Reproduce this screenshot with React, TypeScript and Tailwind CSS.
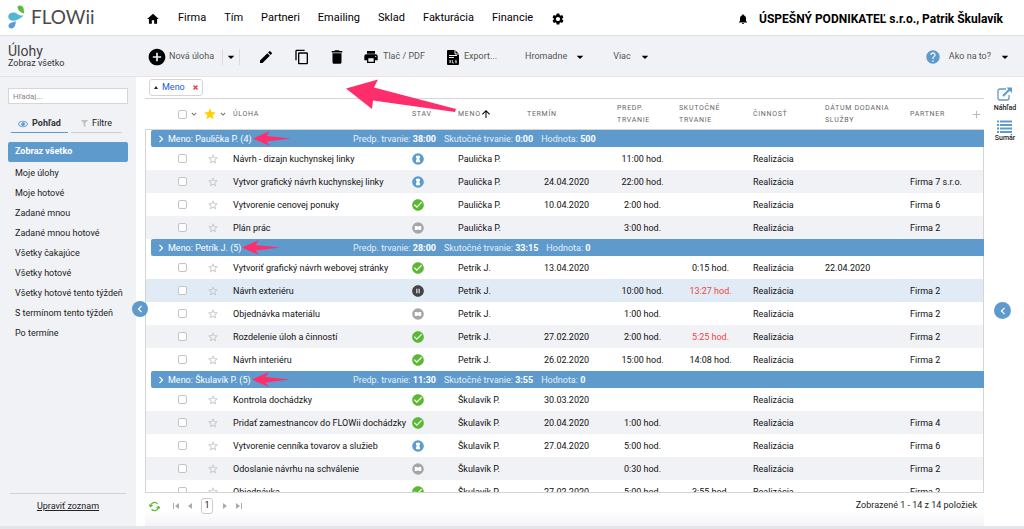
import { useState } from 'react';
import type { ReactNode } from 'react';
import {
  MdAdd,
  MdAddCircle,
  MdArrowDropDown,
  MdArrowUpward,
  MdCheckCircle,
  MdChevronLeft,
  MdChevronRight,
  MdContentCopy,
  MdDelete,
  MdEdit,
  MdHelp,
  MdHome,
  MdKeyboardArrowDown,
  MdNotifications,
  MdPauseCircleFilled,
  MdPrint,
  MdSettings,
  MdStar,
  MdStarBorder,
} from 'react-icons/md';
import { FaFilter, FaRegEye } from 'react-icons/fa';
import clsx from 'clsx';

type Status = 'waiting' | 'done' | 'postponed' | 'paused';

interface Task {
  name: string;
  status: Status;
  due?: string;
  planned?: string;
  actual?: string;
  late?: boolean;
  activity: string;
  delivered?: string;
  partner?: string;
  selected?: boolean;
}

interface Group {
  person: string;
  count: number;
  planned: string;
  actual: string;
  value: string;
  tasks: Task[];
}

const menu = ['Firma', 'Tím', 'Partneri', 'Emailing', 'Sklad', 'Fakturácia', 'Financie'];

const views = [
  'Zobraz všetko',
  'Moje úlohy',
  'Moje hotové',
  'Zadané mnou',
  'Zadané mnou hotové',
  'Všetky čakajúce',
  'Všetky hotové',
  'Všetky hotové tento týždeň',
  'S termínom tento týždeň',
  'Po termíne',
];

const groups: Group[] = [
  {
    person: 'Paulička P.',
    count: 4,
    planned: '38:00',
    actual: '0:00',
    value: '500',
    tasks: [
      { name: 'Návrh - dizajn kuchynskej linky', status: 'waiting', planned: '11:00 hod.', activity: 'Realizácia' },
      { name: 'Vytvor grafický návrh kuchynskej linky', status: 'waiting', due: '24.04.2020', planned: '22:00 hod.', activity: 'Realizácia', partner: 'Firma 7 s.r.o.' },
      { name: 'Vytvorenie cenovej ponuky', status: 'done', due: '10.04.2020', planned: '2:00 hod.', activity: 'Realizácia', partner: 'Firma 6' },
      { name: 'Plán prác', status: 'postponed', planned: '3:00 hod.', activity: 'Realizácia', partner: 'Firma 2' },
    ],
  },
  {
    person: 'Petrík J.',
    count: 5,
    planned: '28:00',
    actual: '33:15',
    value: '0',
    tasks: [
      { name: 'Vytvoriť grafický návrh webovej stránky', status: 'done', due: '13.04.2020', actual: '0:15 hod.', activity: 'Realizácia', delivered: '22.04.2020' },
      { name: 'Návrh exteriéru', status: 'paused', planned: '10:00 hod.', actual: '13:27 hod.', late: true, activity: 'Realizácia', partner: 'Firma 2', selected: true },
      { name: 'Objednávka materiálu', status: 'postponed', planned: '1:00 hod.', activity: 'Realizácia', partner: 'Firma 2' },
      { name: 'Rozdelenie úloh a činností', status: 'done', due: '27.02.2020', planned: '2:00 hod.', actual: '5:25 hod.', late: true, activity: 'Realizácia', partner: 'Firma 2' },
      { name: 'Návrh interiéru', status: 'done', due: '26.02.2020', planned: '15:00 hod.', actual: '14:08 hod.', activity: 'Realizácia', partner: 'Firma 2' },
    ],
  },
  {
    person: 'Škulavík P.',
    count: 5,
    planned: '11:30',
    actual: '3:55',
    value: '0',
    tasks: [
      { name: 'Kontrola dochádzky', status: 'done', due: '30.03.2020', activity: 'Realizácia' },
      { name: 'Pridať zamestnancov do FLOWii dochádzky', status: 'done', due: '20.04.2020', planned: '1:00 hod.', activity: 'Realizácia', partner: 'Firma 4' },
      { name: 'Vytvorenie cenníka tovarov a služieb', status: 'waiting', due: '27.04.2020', planned: '5:00 hod.', activity: 'Realizácia', partner: 'Firma 6' },
      { name: 'Odoslanie návrhu na schválenie', status: 'postponed', planned: '0:30 hod.', activity: 'Realizácia', partner: 'Firma 2' },
      { name: 'Objednávka', status: 'done', due: '27.02.2020', planned: '5:00 hod.', actual: '3:55 hod.', activity: 'Realizácia', partner: 'Firma 2' },
    ],
  },
];

function Logo() {
  return (
    <a href="#" aria-label="FLOWii" className="flex w-[140px] items-center gap-[6px] pb-[3px] pl-2">
      <svg width="17" height="24" viewBox="0 0 17 24">
        <path d="M9.500 1.500C11.500-.5 15 .8 15.600 3.400c.3 1.600.2 3.400.6 5.200C13.200 7.600 9.400 5.400 9.500 1.500z" fill="#5dba3a" />
        <path d="M.4 10.800C1.200 7.200 6.300 6.500 9.500 8.900c1.800 1.300 4 1.700 6 1.500-1.600 2.200-4 3.200-6.600 4.600C5 17 -.6 15 .4 10.800z" fill="#53b7cf" />
        <path d="M.5 20.600c.3-2.200 2.400-3 4.300-3.300 1.400-.3 2-.6 2.900-1.300.2 2.700-.3 5-2 6.600C3.900 24.200.2 23.500.5 20.600z" fill="#5b9bd5" />
      </svg>
      <span className="font-['Lato',sans-serif] text-[19px] leading-6 text-[#4a4a4a]">FLOWii</span>
    </a>
  );
}

function Caret() {
  return <MdArrowDropDown className="size-4 text-black" />;
}

function StatusIcon({ status }: { status: Status }) {
  if (status === 'done') return <MdCheckCircle className="size-[14px] text-[#5cb832]" aria-label="Hotové" />;
  if (status === 'paused') return <MdPauseCircleFilled className="size-[14px] text-[#444]" aria-label="Pozastavené" />;
  if (status === 'waiting') {
    return (
      <svg width="14" height="14" viewBox="0 0 24 24" aria-label="Čaká">
        <circle cx="12" cy="12" r="10" fill="#5b9bd0" />
        <path d="M8.500 6.500h7v3L14 12l1.500 2.500v3h-7v-3L10 12 8.500 9.500z" fill="#fff" />
      </svg>
    );
  }
  return (
    <svg width="14" height="14" viewBox="0 0 24 24" aria-label="Odložené">
      <circle cx="12" cy="12" r="10" fill="#a6a6a6" />
      <path d="M6.500 8.500H10l2 1.500 2-1.500h3.500v7H14L12 14l-2 1.500H6.500z" fill="#fff" />
    </svg>
  );
}

function CheckBox({ label }: { label: string }) {
  return (
    <input
      type="checkbox"
      aria-label={label}
      className="block size-[9px] appearance-none rounded-[2px] border border-[#c4c4c4] bg-white checked:bg-[#5f9acd]"
    />
  );
}

function ToolButton({ icon, label, className }: { icon?: ReactNode; label: string; className?: string }) {
  return (
    <button type="button" className={clsx('flex items-center whitespace-nowrap', className)}>
      {icon}
      {label}
    </button>
  );
}

function Toolbar() {
  return (
    <div className="flex h-[41px] shrink-0 items-center border-b border-[#ebe3e5] bg-[#f1f2f6] pt-[2px] text-[9px] text-[#555]">
      <div className="w-[147px] shrink-0 pb-[2px] pl-2">
        <h1 className="text-[14px] leading-[14px] text-[#444]">Úlohy</h1>
        <p className="leading-[11px] text-[#333]">Zobraz všetko</p>
      </div>
      <ToolButton icon={<MdAddCircle className="size-5 text-black" />} label="Nová úloha" className="gap-[2px]" />
      <button type="button" aria-label="Ďalšie možnosti" className="ml-2 mr-[18px] flex h-4 items-center border-x border-[#dcdcdf]">
        <Caret />
      </button>
      <button type="button" aria-label="Upraviť" className="mr-5">
        <MdEdit className="size-4 text-black" />
      </button>
      <button type="button" aria-label="Kopírovať" className="mr-[18px]">
        <MdContentCopy className="size-4 text-black" />
      </button>
      <button type="button" aria-label="Odstrániť" className="mr-[17px]">
        <MdDelete className="size-[18px] text-black" />
      </button>
      <ToolButton icon={<MdPrint className="size-4 text-black" />} label="Tlač / PDF" className="gap-1" />
      <ToolButton
        className="ml-[22px] gap-[5px]"
        label="Export..."
        icon={
          <svg width="12" height="15" viewBox="0 0 12 15">
            <path d="M1 0h7l4 4v10a1 1 0 0 1-1 1H1a1 1 0 0 1-1-1V1a1 1 0 0 1 1-1z" fill="#000" />
            <path d="M8 0v4h4M2 5.500h8M2 7.500h5" stroke="#f1f2f6" strokeWidth="1" fill="none" />
            <path d="M2.500 10l1.500 3M4 10l-1.500 3M5.500 10v3h1.500M9.700 10.300H8.500v1.200h1v1.200H8" stroke="#f1f2f6" strokeWidth=".7" fill="none" />
          </svg>
        }
      />
      <button type="button" className="ml-[28px] flex items-center gap-[5px]">
        Hromadne <Caret />
      </button>
      <button type="button" className="ml-[25px] flex items-center gap-[6px]">
        Viac <Caret />
      </button>
      <button type="button" className="ml-auto mr-[11px] flex items-center gap-[6px]">
        <MdHelp className="mr-[2px] size-4 text-[#5f9acd]" />
        Ako na to? <Caret />
      </button>
    </div>
  );
}

function Sidebar() {
  const [active, setActive] = useState(views[0]);

  return (
    <aside className="relative flex w-[136px] shrink-0 flex-col bg-[#f1f2f6] pt-[11px] text-[9px] text-[#222]">
      <input
        type="text"
        aria-label="Hľadaj"
        placeholder="Hľadaj..."
        className="mx-2 h-4 w-[120px] border border-[#d6d6d9] bg-white px-1 text-[8px] placeholder:text-[#888]"
      />
      <div className="mt-[11px] flex gap-[3px] px-[11px]">
        <button type="button" className="flex h-[18px] w-[57px] items-center justify-center gap-1 border-b border-[#5f9acd] font-bold text-[#333]">
          <FaRegEye className="size-[10px] text-[#5f9acd]" /> Pohľad
        </button>
        <button type="button" className="flex h-[18px] w-[51px] items-center justify-center gap-1 border-b border-[#cfcfcf]">
          <FaFilter className="size-[7px] text-[#c2c2c2]" /> Filtre
        </button>
      </div>
      <ul className="mt-[9px] px-2">
        {views.map((view) => (
          <li key={view}>
            <button
              type="button"
              onClick={() => setActive(view)}
              className={clsx(
                'block h-5 w-[120px] whitespace-nowrap rounded-[2px] pl-[7px] text-left',
                active === view && 'mb-[2px] bg-[#5f9acd] font-bold text-white'
              )}
            >
              {view}
            </button>
          </li>
        ))}
      </ul>
      <div className="mx-[10px] mb-[13px] mt-auto border-t border-[#d0d1d5] pt-[6px] text-center">
        <a href="#" className="underline">Upraviť zoznam</a>
      </div>
      <button
        type="button"
        aria-label="Skryť panel"
        className="absolute -right-3 top-[224px] z-10 flex size-4 items-center justify-center rounded-full bg-[#5f9acd] text-white"
      >
        <MdChevronLeft className="size-[14px]" />
      </button>
    </aside>
  );
}

function GroupArrow() {
  return (
    <svg width="38" height="15" viewBox="0 0 38 15" className="shrink-0">
      <path d="M0 7.500L17 0l-3.500 5L38 7.500l-24.500 3L17 15z" fill="#ff2d6b" />
    </svg>
  );
}

function GroupRow({ group }: { group: Group }) {
  return (
    <tr className="h-[17px]">
      <td className="border-l border-[#d5d5d5]" />
      <th colSpan={12} scope="rowgroup" className="rounded-l-[2px] bg-[#5f9acd] text-left font-normal text-white">
        <div className="flex items-center">
          <button type="button" className="flex h-[17px] w-[202px] items-center gap-[1px] pl-[3px]">
            <span className="flex items-center">
              <MdChevronRight className="size-[14px]" stroke="currentColor" />
              Meno: {group.person} ({group.count})
            </span>
            <GroupArrow />
          </button>
          <span className="flex gap-2 text-[#e4eef7]">
            <span>Predp. trvanie: <b className="text-white">{group.planned}</b></span>
            <span>Skutočné trvanie: <b className="text-white">{group.actual}</b></span>
            <span>Hodnota: <b className="text-white">{group.value}</b></span>
          </span>
        </div>
      </th>
    </tr>
  );
}

function TaskRow({ task, person }: { task: Task; person: string }) {
  return (
    <tr className={clsx('h-[23px]', task.selected ? 'bg-[#e1ebf5]' : 'even:bg-white odd:bg-[#f1f2f6]')}>
      <td className="border-l border-[#d5d5d5]" />
      <td className="pl-[27px]"><CheckBox label={task.name} /></td>
      <td>
        <button type="button" aria-label="Obľúbené" className="block">
          <MdStarBorder className="size-3 text-[#c4c4c4]" />
        </button>
      </td>
      <td>{task.name}</td>
      <td><span className="-ml-px block"><StatusIcon status={task.status} /></span></td>
      <td>{person}</td>
      <td className="text-center">{task.due}</td>
      <td className="text-center">{task.planned}</td>
      <td className={clsx('text-center', task.late && 'text-[#ee4444]')}>{task.actual}</td>
      <td className="pl-[11px]">{task.activity}</td>
      <td>{task.delivered}</td>
      <td>{task.partner}</td>
      <td className="border-r border-[#d5d5d5]" />
    </tr>
  );
}

function TaskTable() {
  return (
    <div className="min-h-0 flex-1 overflow-hidden border-b border-t border-[#d5d5d5]">
      <table className="w-full table-fixed border-separate border-spacing-0 whitespace-nowrap text-[9px] leading-[12px] text-[#111]">
        <colgroup>
          <col className="w-[6px]" />
          <col className="w-[56px]" />
          <col className="w-[26px]" />
          <col />
          <col className="w-[46px]" />
          <col className="w-[69px]" />
          <col className="w-[79px]" />
          <col className="w-[73px]" />
          <col className="w-[63px]" />
          <col className="w-[83px]" />
          <col className="w-[85px]" />
          <col className="w-[60px]" />
          <col className="w-[14px]" />
        </colgroup>
        <thead>
          <tr className="h-[31px] text-left text-[7px] tracking-widest text-[#666] [&>th]:border-b [&>th]:border-[#d5d5d5] [&>th]:font-normal">
            <td className="border-b border-[#d5d5d5]" />
            <th className="pl-[27px]">
              <span className="flex items-center gap-[2px]">
                <CheckBox label="Označiť všetko" />
                <MdKeyboardArrowDown className="size-[10px]" />
              </span>
            </th>
            <th>
              <span className="-ml-1 flex items-center gap-[1px]">
                <MdStar className="size-[14px] shrink-0 text-[#ffd203]" />
                <MdKeyboardArrowDown className="size-[10px] shrink-0" />
              </span>
            </th>
            <th>ÚLOHA</th>
            <th>STAV</th>
            <th>
              <span className="flex items-center">
                MENO <MdArrowUpward className="-ml-px size-3 text-black" />
              </span>
            </th>
            <th>TERMÍN</th>
            <th className="pl-[11px]">PREDP.<br />TRVANIE</th>
            <th>SKUTOČNÉ<br />TRVANIE</th>
            <th className="pl-[11px]">ČINNOSŤ</th>
            <th>DÁTUM DODANIA<br />SLUŽBY</th>
            <th>PARTNER</th>
            <th>
              <button type="button" aria-label="Pridať stĺpec" className="block">
                <MdAdd className="size-[13px] text-[#bbb]" stroke="currentColor" />
              </button>
            </th>
          </tr>
        </thead>
        {groups.map((group) => (
          <tbody key={group.person}>
            <GroupRow group={group} />
            {group.tasks.map((task) => (
              <TaskRow key={task.name} task={task} person={group.person} />
            ))}
          </tbody>
        ))}
      </table>
    </div>
  );
}

function Pager() {
  return (
    <div className="flex h-[33px] shrink-0 items-center bg-linear-to-b from-white from-50% to-[#f4f4f6] pb-[7px] pl-1 pr-[7px] text-[9px] text-[#222]">
      <button type="button" aria-label="Obnoviť" className="mr-[13px]">
        <svg width="11" height="11" viewBox="0 0 22 22" fill="none" stroke="#5cb832" strokeWidth="2.500">
          <path d="M3 10a8 8 0 0 1 14-4.500M19 12a8 8 0 0 1-14 4.500" />
          <path d="M0 7l3 4 4-3M22 15l-3-4-4 3" />
        </svg>
      </button>
      <button type="button" aria-label="Prvá strana" className="mr-[9px]">
        <svg width="6" height="6" viewBox="0 0 6 6" fill="#aaa"><path d="M0 0h1v6H0zM6 0v6L2 3z" /></svg>
      </button>
      <button type="button" aria-label="Predošlá strana" className="mr-[9px]">
        <svg width="4" height="6" viewBox="0 0 4 6" fill="#aaa"><path d="M4 0v6L0 3z" /></svg>
      </button>
      <button type="button" aria-current="page" className="mr-[10px] h-4 w-3 rounded-[3px] border border-[#ccc] bg-white">1</button>
      <button type="button" aria-label="Ďalšia strana" className="mr-[9px]">
        <svg width="4" height="6" viewBox="0 0 4 6" fill="#aaa"><path d="M0 0v6l4-3z" /></svg>
      </button>
      <button type="button" aria-label="Posledná strana">
        <svg width="6" height="6" viewBox="0 0 6 6" fill="#aaa"><path d="M5 0h1v6H5zM0 0v6l4-3z" /></svg>
      </button>
      <p className="ml-auto">Zobrazené 1 - 14 z 14 položiek</p>
    </div>
  );
}

function RightRail() {
  return (
    <aside className="relative flex w-10 shrink-0 flex-col items-center gap-[7px] pl-[2px] pt-[10px] text-[7px] font-medium leading-[10px] text-[#222]">
      <button type="button" className="flex flex-col items-center gap-[2px]">
        <svg width="16" height="14" viewBox="0 0 16 14" fill="none" stroke="#5f9acd">
          <path d="M9 2H3a2 2 0 0 0-2 2v7a2 2 0 0 0 2 2h7a2 2 0 0 0 2-2V8" strokeWidth="1.300" />
          <path d="M6 9l7-7" strokeWidth="2" />
          <path d="M9.500.5H15V6z" fill="#5f9acd" stroke="none" />
        </svg>
        Náhľad
      </button>
      <button type="button" className="flex flex-col items-center">
        <svg width="15" height="13" viewBox="0 0 15 13" stroke="#5f9acd" strokeWidth="2">
          <path d="M0 1.500h2M3 1.500h12M0 5h2M3 5h12M0 8.500h2M3 8.500h12M0 12h2M3 12h12" />
        </svg>
        Sumár
      </button>
      <button
        type="button"
        aria-label="Zobraziť panel"
        className="absolute right-[13px] top-[225px] flex size-[17px] items-center justify-center rounded-full bg-[#5f9acd] text-white"
      >
        <MdChevronLeft className="size-[14px]" />
      </button>
    </aside>
  );
}

export default function App() {
  return (
    <div className="flex h-screen flex-col bg-white font-['Roboto',sans-serif]">
      <header className="flex h-9 shrink-0 items-center border-b border-[#e0e0e3] pt-[2px] text-black">
        <Logo />
        <nav className="ml-[6px] flex items-center gap-[18px] text-[11px]">
          <a href="#" aria-label="Domov"><MdHome className="size-[14px]" /></a>
          {menu.map((item) => (
            <a key={item} href="#">{item}</a>
          ))}
          <a href="#" aria-label="Nastavenia"><MdSettings className="size-[14px]" /></a>
        </nav>
        <div className="ml-auto mr-[21px] flex items-center gap-[10px] text-[12px] font-bold">
          <MdNotifications className="size-3" />
          <span>ÚSPEŠNÝ PODNIKATEĽ s.r.o., Patrik Škulavík</span>
        </div>
      </header>

      <Toolbar />

      <div className="flex min-h-0 flex-1">
        <Sidebar />
        <main className="relative ml-[9px] flex min-w-0 flex-1 flex-col">
          <div className="flex h-[21px] shrink-0 items-center pl-1">
            <button type="button" className="flex h-[17px] items-center rounded-[3px] border border-[#d5d5d5] px-1 text-[9px] text-[#1560d4]">
              <svg width="4" height="3" viewBox="0 0 4 3" className="mr-1"><path d="M0 3l2-3 2 3z" fill="#222" /></svg>
              Meno
              <svg width="5" height="5" viewBox="0 0 5 5" className="ml-2"><path d="M.5.5l4 4M4.500.5l-4 4" stroke="#e03c3c" strokeWidth="1.400" /></svg>
            </button>
          </div>
          <TaskTable />
          <Pager />
          {/* callout pointing at the grouping chip */}
          <svg width="112" height="34" viewBox="0 0 112 34" className="pointer-events-none absolute left-[200px] top-[2px]">
            <path d="M1 9.500L33 .5l-4 8 82 21.500-1 3-82-11.500-1 8.500z" fill="#ff2d6b" />
          </svg>
        </main>
        <RightRail />
      </div>
      <div className="h-[3px] shrink-0 bg-[#e4e5ea]" />
    </div>
  );
}
